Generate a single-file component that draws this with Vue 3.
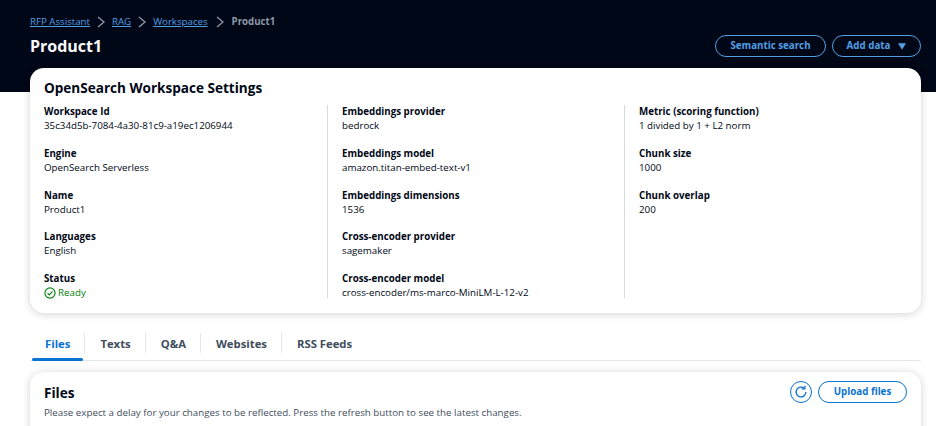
<script setup>
const columns = [
  [
    ['Workspace Id', '35c34d5b-7084-4a30-81c9-a19ec1206944'],
    ['Engine', 'OpenSearch Serverless'],
    ['Name', 'Product1'],
    ['Languages', 'English'],
    ['Status', 'Ready', true],
  ],
  [
    ['Embeddings provider', 'bedrock'],
    ['Embeddings model', 'amazon.titan-embed-text-v1'],
    ['Embeddings dimensions', '1536'],
    ['Cross-encoder provider', 'sagemaker'],
    ['Cross-encoder model', 'cross-encoder/ms-marco-MiniLM-L-12-v2'],
  ],
  [
    ['Metric (scoring function)', '1 divided by 1 + L2 norm'],
    ['Chunk size', '1000'],
    ['Chunk overlap', '200'],
  ],
]
const tabs = ['Files', 'Texts', 'Q&A', 'Websites', 'RSS Feeds']
</script>

<template>
  <div class="page">
    <header class="hero">
      <nav class="crumbs">
        <a>RFP Assistant</a>
        <svg class="sep" viewBox="0 0 10 12"><path d="M2 1l6 5-6 5" /></svg>
        <a>RAG</a>
        <svg class="sep" viewBox="0 0 10 12"><path d="M2 1l6 5-6 5" /></svg>
        <a>Workspaces</a>
        <svg class="sep" viewBox="0 0 10 12"><path d="M2 1l6 5-6 5" /></svg>
        <span class="current">Product1</span>
      </nav>
      <div class="title-row">
        <h1>Product1</h1>
        <div class="actions">
          <button class="btn dark semantic">Semantic search</button>
          <button class="btn dark add">Add data
            <svg class="caret" viewBox="0 0 10 8"><path d="M0 0h10L5 8z" /></svg>
          </button>
        </div>
      </div>
    </header>

    <main class="content">
      <section class="card settings">
        <h2>OpenSearch Workspace Settings</h2>
        <div class="cols">
          <div v-for="(col, i) in columns" :key="i" class="col">
            <div v-for="item in col" :key="item[0]" class="pair">
              <div class="label">{{ item[0] }}</div>
              <div v-if="item[2]" class="value ok">
                <svg class="check" viewBox="0 0 16 16"><circle cx="8" cy="8" r="6.8" /><path d="M4.8 8.2l2.3 2.3 4.2-4.6" /></svg>Ready
              </div>
              <div v-else class="value">{{ item[1] }}</div>
            </div>
          </div>
        </div>
      </section>

      <div class="tabs">
        <div v-for="(t, i) in tabs" :key="t" class="tab" :class="{ active: i === 0 }"><span>{{ t }}</span></div>
      </div>

      <section class="card files">
        <div class="files-head">
          <div>
            <h2>Files</h2>
            <p>Please expect a delay for your changes to be reflected. Press the refresh button to see the latest changes.</p>
          </div>
          <div class="actions">
            <button class="round">
              <svg viewBox="0 0 16 16"><path d="M13.6 8a5.6 5.6 0 1 1-1.8-4.1" /><path d="M12.4 0.8v3.6H8.8" /></svg>
            </button>
            <button class="btn light">Upload files</button>
          </div>
        </div>
      </section>
    </main>
  </div>
</template>

<style>
html, body { margin: 0; background: #fff; overflow: hidden; }
</style>

<style scoped>
.page {
  width: 936px;
  height: 426px;
  overflow: hidden;
  font-family: "Open Sans", sans-serif;
  font-size: 9.75px;
  color: #000716;
  background: #fff;
}
.hero {
  background: #000716;
  height: 92px;
  box-sizing: border-box;
  padding: 15px 15px 0 30px;
}
.crumbs {
  display: flex;
  align-items: center;
  height: 14px;
  font-size: 9.7px;
  line-height: 14px;
  color: #539fe5;
}
.crumbs a { text-decoration: underline; }
.sep { width: 10px; height: 12px; margin: 0 6px 0 6px; fill: none; stroke: #8d99a8; stroke-width: 1.3; }
.sep:last-of-type { margin-right: 7px; }
.crumbs a:nth-of-type(3) { margin-right: 1px; }
.current { color: #8d99a8; font-weight: 700; }
.title-row {
  display: flex;
  justify-content: space-between;
  margin-top: 6px;
}
h1 {
  margin: 0;
  font-size: 16px;
  line-height: 22px;
  font-weight: 700;
  color: #fbfbfb;
}
.actions { display: flex; align-items: center; gap: 6px; }
.btn {
  height: 22px;
  box-sizing: border-box;
  border-radius: 11px;
  padding: 0;
  border: 1.5px solid;
  background: transparent;
  font-family: inherit;
  font-size: 9.75px;
  font-weight: 700;
  line-height: 1;
  display: flex;
  align-items: center;
  justify-content: center;
}
.dark { color: #539fe5; border-color: #539fe5; }
.semantic { width: 111px; }
.add { width: 89px; }
.light { color: #0972d3; border-color: #0972d3; width: 89px; }
.caret { width: 8px; height: 7px; fill: #539fe5; margin-left: 8px; }
.content { padding: 0 15px 0 30px; margin-top: -24px; }
.card {
  background: #fff;
  border-radius: 14px;
  box-shadow: 0 1px 8px 0 rgba(0, 7, 22, 0.18);
}
.settings {
  height: 245px;
  box-sizing: border-box;
  padding: 10px 14px 0;
}
h2 {
  margin: 0;
  font-size: 13.55px;
  line-height: 20px;
  font-weight: 700;
}
.cols {
  display: grid;
  grid-template-columns: 283px 297px 1fr;
  margin-top: 7px;
}
.col {
  height: 193px;
  display: flex;
  flex-direction: column;
  gap: 14px;
  padding-left: 14px;
  border-left: 1px solid #d5dbdb;
}
.col:first-child { padding-left: 0; border-left: 0; }
.pair { height: 27.75px; line-height: 14px; }
.label { font-weight: 700; }
.value { display: flex; align-items: center; }
.ok { color: #037f0c; }
.check {
  width: 12px;
  height: 12px;
  margin-right: 2px;
  fill: none;
  stroke: #037f0c;
  stroke-width: 1.5;
}
.tabs {
  display: flex;
  margin-top: 13px;
  border-bottom: 1px solid #e3e6ea;
  height: 34px;
}
.tab {
  position: relative;
  display: flex;
  align-items: center;
  height: 34px;
  padding: 0 14px 0 16px;
  font-size: 11.3px;
  font-weight: 700;
  color: #414d5c;
}
.tab + .tab::before {
  content: "";
  position: absolute;
  left: 0;
  top: 7px;
  height: 20px;
  width: 1px;
  background: #e3e6ea;
}
.tab:first-child { margin-left: 2px; padding: 0 14px 0 13px; }
.active { color: #0972d3; }
.active::after {
  content: "";
  position: absolute;
  left: 0;
  right: 1px;
  bottom: -1px;
  height: 3px;
  border-radius: 2px;
  background: #0972d3;
}
.files {
  margin-top: 11px;
  height: 100px;
  padding: 11px 14px 0;
  box-sizing: border-box;
}
.files-head { display: flex; justify-content: space-between; align-items: flex-start; }
.files-head .actions { margin-top: -2px; }
.files-head p { margin: 3px 0 0; line-height: 14px; color: #414d5c; font-size: 9.75px; }
.round {
  width: 22px;
  height: 22px;
  padding: 0;
  box-sizing: border-box;
  border-radius: 50%;
  border: 1.5px solid #0972d3;
  background: transparent;
  display: flex;
  align-items: center;
  justify-content: center;
}
.round svg { width: 14px; height: 14px; fill: none; stroke: #0972d3; stroke-width: 1.5; }
</style>
